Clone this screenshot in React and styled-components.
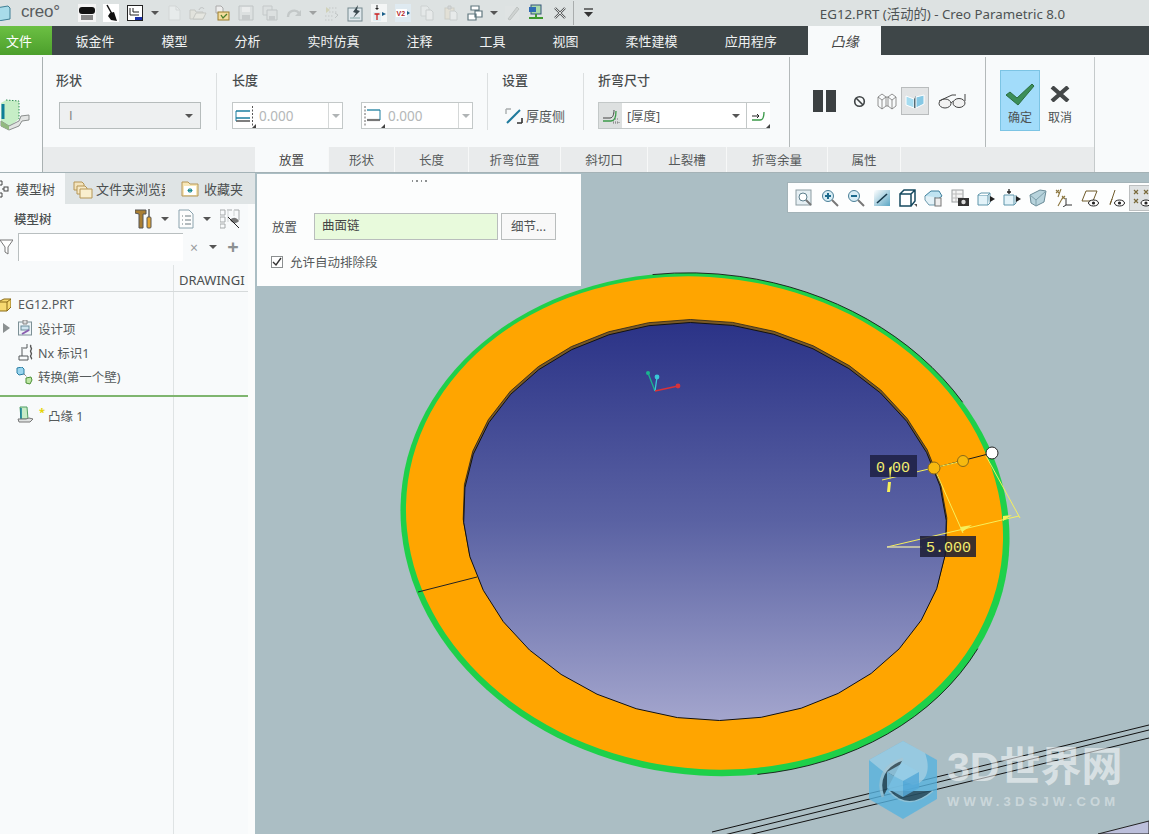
import React from 'react';
import styled, { createGlobalStyle } from 'styled-components';

const CJK = `"Noto Sans", "Noto Sans CJK SC", sans-serif`;

const Global = createGlobalStyle`
  html, body { margin: 0; padding: 0; background: #abbec4; }
  * { box-sizing: border-box; }
  body { font-family: ${CJK}; font-size: 13px; color: #4a4f50; }
`;

const Page = styled.div`width:1149px;height:834px;overflow:hidden;display:flex;flex-direction:column;`;

/* ---------- title bar ---------- */
const TitleBar = styled.div`height:26px;background:#dde2e2;display:flex;align-items:center;flex:none;`;
const Logo = styled.div`width:75px;display:flex;align-items:center;gap:10px;flex:none;color:#585c5e;`;
const LogoText = styled.span`font-family:"Liberation Sans",sans-serif;font-size:17px;letter-spacing:-.2px;position:relative;top:-1px;`;
const Slot = styled.div`width:${p => p.$w || 24}px;height:20px;display:flex;align-items:center;justify-content:center;flex:none;opacity:${p => p.$faded ? .45 : 1};`;
const TitleDivider = styled.div`width:1px;height:24px;background:#a9adad;margin:0 5px 0 1px;flex:none;`;
const TitleText = styled.div`margin-left:auto;padding-right:84px;font-size:13.3px;color:#4d5253;white-space:nowrap;`;

/* ---------- menu ---------- */
const MenuBar = styled.div`height:29px;background:#3e4648;display:flex;flex:none;align-items:stretch;`;
const FileTab = styled.div`width:52px;background:linear-gradient(#6cc043,#4c9f2c);color:#fff;display:flex;align-items:center;padding-left:6px;font-size:13px;`;
const MenuItem = styled.div`padding:0 23.5px;color:#f0f2f2;display:flex;align-items:center;font-size:13px;white-space:nowrap;`;
const ContextTab = styled.div`width:73px;margin-left:8px;background:#f8fafb;color:#444;display:flex;align-items:center;justify-content:center;font-style:italic;font-size:14px;`;

/* ---------- ribbon ---------- */
const Ribbon = styled.div`height:118px;background:#f8fafb;display:flex;flex:none;border-bottom:1px solid #a4b2b6;`;
const RibbonIconCol = styled.div`width:43px;border-right:1px solid #a9b0b1;margin-top:2px;display:flex;align-items:flex-start;padding-top:42px;`;
const RibbonMain = styled.div`width:1052px;border-right:1px solid #c5cacb;margin-top:2px;display:flex;flex-direction:column;`;
const GroupRow = styled.div`height:90px;display:flex;`;
const Group = styled.div`width:${p => p.$w}px;padding:15px 0 0 ${p => p.$pad}px;flex:none;`;
const GroupLabel = styled.div`height:16px;line-height:16px;font-size:13px;color:#484c4d;font-weight:500;`;
const Controls = styled.div`display:flex;align-items:center;margin-top:14px;height:27px;`;
const Divider = styled.div`width:1px;margin:16px 0 17px;background:#dcdfe0;flex:none;`;
const HardDivider = styled.div`width:1px;background:#b4b9ba;flex:none;`;
const ShapeSelect = styled.div`width:142px;height:27px;margin-left:3px;background:#eef0f1;border:1px solid #b6bcbc;display:flex;align-items:center;justify-content:space-between;padding:0 7px 0 9px;color:#888;font-family:"Liberation Sans",sans-serif;`;
const Caret = styled.span`width:0;height:0;border-left:4px solid transparent;border-right:4px solid transparent;border-top:4px solid ${p => p.$c || '#555'};flex:none;display:block;`;
const LengthField = styled.div`width:${p => p.$w}px;height:27px;margin-right:${p => p.$mr || 0}px;background:#fff;border:1px solid #c3c8c8;display:flex;align-items:center;flex:none;`;
const FieldIcon = styled.div`width:23px;height:25px;flex:none;display:flex;align-items:center;justify-content:center;position:relative;background:${p => p.$bg || 'transparent'};`;
const FieldValue = styled.div`flex:1;padding-left:3px;color:#b4b7b8;font-size:13.5px;`;
const Spin = styled.div`width:14px;height:25px;border-left:1px solid #d5d8d8;display:flex;align-items:center;justify-content:center;flex:none;`;
const Corner = styled.span`position:absolute;right:0;bottom:0;width:0;height:0;border-left:4px solid transparent;border-bottom:4px solid #444;`;
const ThicknessButton = styled.div`display:flex;align-items:center;gap:3px;margin-left:3px;font-size:13px;color:#55595a;`;
const BendField = styled.div`width:172px;height:27px;background:#fff;border:1px solid #c3c8c8;border-right:none;display:flex;align-items:center;font-size:12.5px;color:#555;`;
const BendText = styled.div`flex:1;padding-left:5px;`;
const BendButton = styled.div`width:24px;height:25px;border-left:1px solid #c3c8c8;margin-left:6px;display:flex;align-items:center;justify-content:center;position:relative;flex:none;`;
const ViewGroup = styled.div`width:195px;display:flex;align-items:center;padding:0 0 2px 23px;flex:none;`;
const NoSlot = styled.div`width:18px;margin:0 7px 0 11px;display:flex;justify-content:center;flex:none;`;
const ViewBtn = styled.div`width:${p => p.$w}px;height:28px;display:flex;align-items:center;justify-content:center;margin-right:${p => p.$mr || 0}px;flex:none;background:${p => p.$on ? '#e2e4e5' : 'transparent'};border:${p => p.$on ? '1px solid #b9bcbd' : 'none'};`;
const PauseBar = styled.span`width:10px;height:22px;background:#3c4042;display:block;margin-right:3px;flex:none;`;
const ActionGroup = styled.div`flex:1;display:flex;padding:13px 0 0 14px;gap:0;`;
const ActionBtn = styled.div`width:40px;height:61px;background:${p => p.$on ? '#a2dcfa' : 'transparent'};border:1px solid ${p => p.$on ? '#7cc4e4' : 'transparent'};display:flex;flex-direction:column;align-items:center;font-size:12px;color:#4d5254;padding-top:9px;`;
const ActionIcon = styled.div`height:28px;display:flex;align-items:center;justify-content:center;flex:none;`;
const TabsRow = styled.div`height:25px;background:#e9ebec;display:flex;`;
const TabFiller = styled.div`width:212px;flex:none;`;
const PanelTab = styled.div`width:${p => p.$w}px;flex:none;display:flex;align-items:center;justify-content:center;font-size:12.5px;color:${p => p.$on ? '#444' : '#55595a'};background:${p => p.$on ? '#f8fafb' : 'transparent'};border-right:1px solid #f7f8f8;`;

/* ---------- body ---------- */
const Body = styled.div`flex:1;display:flex;min-height:0;`;
const Sidebar = styled.div`width:255px;flex:none;background:#f8fafb;border-right:7px solid #fbfcfc;box-shadow:1px 0 0 #9fb0b5;display:flex;flex-direction:column;position:relative;`;
const SideTabs = styled.div`height:31px;display:flex;background:#dfe4e5;width:255px;flex:none;`;
const SideTab = styled.div`width:${p => p.$w}px;flex:none;display:flex;align-items:center;gap:${p => p.$gap || 4}px;padding-left:${p => p.$pad}px;background:${p => p.$on ? '#f8fafb' : 'transparent'};font-size:13px;color:#4b4f50;overflow:hidden;white-space:nowrap;`;
const ClippedLabel = styled.span`width:69px;overflow:hidden;display:block;flex:none;`;
const ToolRow = styled.div`height:29px;display:flex;align-items:center;padding-left:14px;flex:none;`;
const ToolLabel = styled.div`width:121px;font-size:12.5px;font-weight:500;color:#4a4e4f;`;
const ToolSlot = styled.div`width:${p => p.$w}px;display:flex;justify-content:center;align-items:center;flex:none;`;
const ClearMark = styled.span`color:#9a9e9f;font-size:14px;`;
const AddMark = styled.span`color:#8c9091;font-size:20px;font-weight:700;line-height:1;`;
const FilterRow = styled.div`height:28px;display:flex;align-items:center;flex:none;`;
const FilterInput = styled.div`width:165px;height:28px;margin:0 5px;background:#fff;border-top:1px solid #b9bfc0;border-left:1px solid #b9bfc0;flex:none;`;
const TreeBody = styled.div`flex:1;background:linear-gradient(#dfe3e4,#dfe3e4) 173px 4px/1px 100% no-repeat;display:flex;flex-direction:column;`;
const ColumnHead = styled.div`height:31px;border-bottom:1px solid #d6dadb;display:flex;align-items:flex-end;padding:0 0 2px 179px;font-size:13px;color:#4b4f50;flex:none;overflow:hidden;white-space:nowrap;`;
const TreeRow = styled.div`height:24px;display:flex;align-items:center;padding-left:${p => p.$pad}px;gap:${p => p.$gap || 6}px;font-size:12.5px;color:#555a5b;flex:none;`;
const TreeFirst = styled(TreeRow)`padding-top:1px;`;
const GreenRule = styled.div`height:2px;background:#7fb56f;margin:7px 0 6px;flex:none;`;
const TreeArrow = styled.span`width:0;height:0;border-top:5px solid transparent;border-bottom:5px solid transparent;border-left:7px solid #8b9091;display:block;margin-left:-15px;margin-right:2px;`;
const NewMark = styled.span`color:#e5d400;font-size:11px;font-weight:700;position:relative;top:-4px;margin:0 -3px 0 0;`;

/* ---------- canvas ---------- */
const Canvas = styled.div`flex:1;position:relative;background:#abbec4;overflow:hidden;`;
const Scene = styled.svg`width:100%;height:100%;display:block;`;
const DimText = styled.text`font-family:"Liberation Mono",monospace;font-size:15px;fill:#f2ee6e;`;
const Placement = styled.div`position:absolute;left:2px;top:1px;width:324px;height:112px;background:#fcfdfd;display:flex;flex-direction:column;padding:0 14px;`;
const Grip = styled.div`height:14px;margin:4px 0 21px;display:flex;justify-content:center;gap:3px;padding-top:2px;& > span{width:1.5px;height:1.5px;background:#8d9091;display:block;}`;
const PlaceRow = styled.div`display:flex;align-items:center;height:27px;font-size:12.5px;color:#505455;`;
const PlaceLabel = styled.div`width:42px;margin-left:1px;flex:none;`;
const PlaceInput = styled.div`width:184px;height:27px;background:#e8fadc;border:1px solid #b9bdbd;padding-left:7px;line-height:24px;color:#444;flex:none;`;
const DetailBtn = styled.div`width:55px;height:27px;margin-left:3px;background:#f8f8f8;border:1px solid #b9bdbd;text-align:center;line-height:25px;color:#505455;flex:none;`;
const CheckRow = styled.div`display:flex;align-items:center;margin-top:12px;gap:7px;font-size:12.5px;color:#555a5b;`;
const CheckBox = styled.div`width:12px;height:12px;border:1px solid #8b8f90;background:#fff;display:flex;align-items:center;justify-content:center;flex:none;`;
const ViewBar = styled.div`position:absolute;left:532px;top:9px;width:370px;height:31px;background:#fdfefe;border:1px solid #a3b3b8;display:flex;align-items:center;padding-left:3px;`;
const ViewTool = styled.div`width:26px;height:26px;flex:none;display:flex;align-items:center;justify-content:center;background:${p => p.$on ? '#dfe2e3' : 'transparent'};border:${p => p.$on ? '1px solid #bcbfc0' : 'none'};`;
const Watermark = styled.div`position:absolute;left:612px;top:566px;display:flex;align-items:flex-start;gap:8px;pointer-events:none;`;
const WmCol = styled.div`display:flex;flex-direction:column;margin-top:7px;`;
const WmTitle = styled.div`font-family:"Liberation Sans","Noto Sans CJK SC",sans-serif;font-weight:700;font-size:41px;line-height:42px;color:rgba(255,255,255,.55);white-space:nowrap;`;
const WmUrl = styled.div`font-family:"Liberation Sans",sans-serif;font-weight:700;font-size:13px;letter-spacing:4.2px;color:rgba(255,255,255,.4);margin-top:6px;white-space:nowrap;`;

/* ---------- geometry helpers for the part drawing ---------- */
function facets(cx, cy, a, b, deg, n) {
  const r = deg * Math.PI / 180;
  const pts = [];
  for (let i = 0; i < n; i++) {
    const t = (i / n) * Math.PI * 2;
    const x = a * Math.cos(t), y = b * Math.sin(t);
    pts.push(`${(cx + x * Math.cos(r) - y * Math.sin(r)).toFixed(1)},${(cy + x * Math.sin(r) + y * Math.cos(r)).toFixed(1)}`);
  }
  return pts.join(' ');
}

/* ---------- small drawings ---------- */
const S = ({ w = 16, h = 16, vb, children }) => <svg width={w} height={h} viewBox={vb || `0 0 ${w} ${h}`} fill="none">{children}</svg>;

const CreoCube = () => <S w={11} h={16}><path d="M-4 3 L8 1 L10 3 V14 L-2 16Z" fill="#a8dcea" stroke="#3f7f95" /></S>;
const QPrinter = () => <S w={18} h={18}><rect width="18" height="18" fill="#f4f4f4"/><rect x="1" y="3" width="16" height="7" rx="3" fill="#111"/><path d="M3 11h12v5H3z" fill="#fff"/><path d="M4 11v5M6 11v5M8 11v5M10 11v5M12 11v5M14 11v5" stroke="#111"/></S>;
const QBrush = () => <S w={16} h={18}><rect width="16" height="18" fill="#fff"/><path d="M4 1l5 9" stroke="#111" strokeWidth="1.5"/><path d="M7 9l4-1 3 9-6-1-3-4z" fill="#111"/></S>;
const QPlan = () => <S><rect x=".5" y=".5" width="15" height="15" fill="#fff" stroke="#222"/><path d="M3 3v7h9" stroke="#222"/><path d="M6 3v4h6" stroke="#222"/><rect x="8" y="12" width="7" height="3" fill="#1a2fa8"/></S>;
const QDoc = () => <S w={13} h={16}><path d="M1 1h7l4 4v10H1z" fill="#f4f6f6" stroke="#c7cbcb"/><path d="M8 1v4h4" stroke="#c7cbcb"/></S>;
const QFolder = () => <S w={18} h={16}><path d="M1 5h5l1 2h7v7H1z" fill="#e6e2d5" stroke="#a9a9a0"/><path d="M4 14l3-6h10l-3 6z" fill="#f0ecdf" stroke="#a9a9a0"/><path d="M10 5c1-3 4-3 5-1" stroke="#999"/></S>;
const QFolderCheck = () => <S><path d="M2 1h5l2 2v5H2z" fill="#eee" stroke="#aaa"/><rect x="4" y="7" width="11" height="8" fill="#f3dc9c" stroke="#9a7d2d"/><path d="M7 10l2 3 4-4" stroke="#4b7d2b" strokeWidth="1.3"/></S>;
const QSave = () => <S><path d="M1 1h14v14H1z" fill="#dcdfdf" stroke="#9da2a3"/><rect x="4" y="2" width="8" height="5" fill="#fafafa"/><rect x="4" y="10" width="8" height="5" fill="#adb1b2"/></S>;
const QSaveAs = () => <S><path d="M1 1h9v9H1z" fill="#dcdfdf" stroke="#a8acad"/><path d="M5 5h10v10H5z" fill="#dcdfdf" stroke="#9da2a3"/><rect x="7" y="11" width="6" height="4" fill="#adb1b2"/></S>;
const QRedo = () => <S><path d="M2 12c0-7 8-8 11-4" stroke="#a4a9aa" strokeWidth="2.4"/><path d="M15 5v6h-6z" fill="#a4a9aa"/></S>;
const QRegen = () => <S><path d="M6 3h9M6 7h9M2 11h9M2 15h9" stroke="#b9bdbe" strokeDasharray="1.5 1.5" strokeWidth="1.5"/><path d="M3 2l4 3-4 3z" fill="#c4c089"/><path d="M12 8l3 2-3 3" stroke="#9ea2a3"/></S>;
const QBolt = () => <S w={17} h={17}><rect x="1" y="3" width="14" height="13" fill="#dfe8ec" stroke="#77898f"/><path d="M11 0L6 7l3 1-3 5 7-7-3-1z" fill="#3b4a50"/><path d="M3 13h10" stroke="#8aa"/></S>;
const QT = () => <S w={16} h={18}><rect width="16" height="18" fill="#f4f6f6"/><path d="M6 1v4" stroke="#222"/><path d="M4 4h4l-2 2z" fill="#222"/><rect x="2" y="8" width="8" height="9" fill="#e2eff3"/><path d="M3.5 10h5M6 10v6" stroke="#c22" strokeWidth="1.3"/><path d="M15 10l-4 -2v4z" fill="#1b5f8a"/></S>;
const QV2 = () => <S w={16} h={18}><rect width="16" height="18" fill="#dfeaf1"/><rect x="1" y="5" width="11" height="8" fill="#fff"/><text x="1.5" y="12" fontSize="7" fontWeight="700" fontFamily="Liberation Sans" fill="#b3262c">V2</text><path d="M15 9l-3-2v4z" fill="#1b5f8a"/></S>;
const QCopy = () => <S><path d="M2 1h6l2 2v8H2z" fill="#eef0f0" stroke="#bdc1c1"/><path d="M7 5h5l2 2v8H7z" fill="#f4f5f5" stroke="#b3b7b7"/></S>;
const QPaste = () => <S><rect x="2" y="3" width="9" height="11" fill="#eadfc9" stroke="#bcb6a6"/><path d="M5 1h3v3H5z" fill="#ccc" stroke="#aaa"/><path d="M7 6h5l2 2v7H7z" fill="#f4f5f5" stroke="#b3b7b7"/></S>;
const QWindows = () => <S><path d="M4 1h8v4H4zM8 6h7v6H8zM1 9h8v6H1z" fill="#fff" stroke="#60777f" strokeWidth="1.2"/></S>;
const QPen = () => <S w={16} h={18}><path d="M1 2h10l4 3v12H1z" fill="#e4e8e8" opacity=".7"/><path d="M4 15L13 3l2 2-9 11z" fill="#bfc3c0" stroke="#9a9e9b"/></S>;
const QNet = () => <S w={16} h={18}><rect x="3" y="1" width="10" height="9" fill="#a9d9a9" stroke="#35547a"/><rect x="1" y="3" width="7" height="5" fill="#2f6bb4"/><path d="M8 10v3M1 14h14" stroke="#3e9a2e" strokeWidth="2"/></S>;
const QClose = () => <S w={12} h={12}><path d="M1 1l10 10M11 1L1 11" stroke="#55595a" strokeWidth="2.4"/><path d="M1 1l10 10M11 1L1 11" stroke="#fff" strokeWidth=".8"/></S>;
const QMore = () => <S w={9} h={10}><path d="M0 1h9" stroke="#333" strokeWidth="1.3"/><path d="M0 4h9L4.5 9z" fill="#333"/></S>;

const FlangeBig = () => (
  <S w={30} h={32}>
    <path d="M1 4L6 1 19 2V20L9 28 1 24Z" fill="#c6eec6" />
    <path d="M6 1L19 2V20" stroke="#2f8f55" strokeDasharray="1.5 1.5" />
    <path d="M3 5V20" stroke="#0f7e99" strokeWidth="3" />
    <path d="M1 22L9 27 19 22 21 17 29 16V21L22 22 19 27 9 31 1 27Z" fill="#e3e5e4" stroke="#8a8e8d" />
    <path d="M1 22L9 27V31L1 27Z" fill="#92b97f" />
  </S>
);
const DimLeft = ({ flip }) => <S w={21} h={20}><path d={flip ? 'M1 12h16M1 5h16' : 'M2 5h14M2 12h14'} stroke={flip ? '#8a8e8e' : '#1d7fa0'} strokeWidth="1.4" /><path d="M2 15h14" stroke="#7f7f7f" strokeWidth="2"/><path d="M2 5v10" stroke="#1d7fa0"/><path d="M18.5 0v20" stroke="#555" strokeDasharray="2 1.5"/></S>;
const DimRight = () => <S w={21} h={20}><path d="M2 0v20" stroke="#666" strokeDasharray="2 1.5"/><path d="M4 4h13" stroke="#1d7fa0" strokeWidth="1.3"/><path d="M4 14h13" stroke="#777" strokeWidth="2.2"/><path d="M17 4v10" stroke="#1d7fa0"/></S>;
const Thick = () => <S w={18} h={18}><path d="M2 16L15 3" stroke="#1f7a9c" strokeWidth="2"/><path d="M1 2h5M1 2v5" stroke="#a9adae" strokeWidth="1.4"/><path d="M17 16h-5M17 16v-5" stroke="#333" strokeWidth="1.6"/></S>;
const BendA = () => <S w={18} h={18}><path d="M1 14h8c3 0 5-4 5-10" stroke="#3c9a4a" strokeWidth="1.3"/><path d="M1 11h7c3 0 4-4 4-8" stroke="#444"/><path d="M11 15h6v1h-6zM13 12h4" stroke="#777" strokeDasharray="1 1"/></S>;
const BendB = () => <S w={18} h={18}><path d="M2 13h8c3 0 4-4 4-8" stroke="#3c9a4a" strokeWidth="1.3"/><path d="M2 9h7l-2-2M9 9l-2 2" stroke="#222"/></S>;
const NoSign = () => <S w={13} h={13}><circle cx="6.5" cy="6.5" r="4.8" stroke="#3f4345" strokeWidth="1.6"/><path d="M3 3l7 7" stroke="#3f4345" strokeWidth="1.6"/></S>;
const WireBox = () => <S w={20} h={18}><path d="M1 5l4-3 4 3-4 3zM11 5l4-3 4 3-4 3z" stroke="#777" strokeWidth=".8"/><path d="M1 5v9l4 3V8M9 5v9l-4 3M11 5v9l4 3V8M19 5v9l-4 3M9 5l2 0M9 14l2 0" stroke="#777" strokeWidth=".8"/></S>;
const SolidBox = () => <S w={20} h={16}><path d="M1 3l8 3v9l-8-3z" fill="#a6dcf0" stroke="#fff"/><path d="M9 6l2-3v12l-2 0z" fill="#536a73"/><path d="M11 4l8-2v9l-8 4z" fill="#86c8e4" stroke="#fff"/></S>;
const Glasses = () => <S w={28} h={16}><ellipse cx="7" cy="10.5" rx="6" ry="4.5" stroke="#444" fill="#f2f2f2"/><ellipse cx="21" cy="10" rx="6" ry="4.5" stroke="#444" fill="#f2f2f2"/><path d="M13 10c2-2 2-2 2-1M1 8L14 2l4 0M27 8V1" stroke="#444"/></S>;
const Check = () => <S w={30} h={24}><path d="M1 13l4-3 7 6L27 2l2 2-16 19z" fill="#3b8e58" stroke="#2b6d40"/></S>;
const Cross = () => <S w={20} h={16}><path d="M2 1l16 14M18 1L2 15" stroke="#444748" strokeWidth="4.2"/></S>;

const TreeIconSmall = () => <S w={10} h={20}><path d="M-3 2h5v4h-5zM-3 14h5v4h-5z" stroke="#444"/><rect x="4" y="8" width="4" height="4" stroke="#444"/><path d="M2 10h2" stroke="#444"/></S>;
const Folders = () => <S w={20} h={20}><path d="M1 3h8l2 2v6H1z" fill="#f3e3bc" stroke="#b59656"/><path d="M4 7h8l2 2v6H4z" fill="#f7e9c5" stroke="#b59656"/><path d="M7 10h12v9H7z" fill="#f9efce" stroke="#b59656"/></S>;
const StarFolder = () => <S w={18} h={18}><path d="M1 2h6l2 2h8v12H1z" fill="#f8e7b7" stroke="#b59656"/><rect x="3" y="6" width="12" height="9" fill="#fff"/><path d="M9 8v5M6.5 10.5h5M7 9l4 3M11 9l-4 3" stroke="#1a8a90" /></S>;
const Hammer = () => <S w={18} h={21}><path d="M0 2h11v4H8v14H4V6L0 5z" fill="#a97e33" stroke="#555"/><rect x="13" y="1" width="2" height="9" fill="#888"/><rect x="12" y="9" width="4" height="11" rx="1" fill="#e3a634" stroke="#555"/></S>;
const ListDoc = () => <S w={16} h={20}><path d="M1 1h10l4 4v14H1z" fill="#fdfdfd" stroke="#8aa2ad"/><path d="M4 7h1M7 7h6M4 11h1M7 11h6M4 15h1M7 15h6" stroke="#6c7a80"/></S>;
const ColEye = () => <S w={20} h={20}><path d="M0 1h5v5H0zM0 8h5v5H0zM0 15h5v4H0zM7 1h5M14 1h5M19 1v10" stroke="#a5a9aa"/><path d="M8 1v12M14 1v6" stroke="#cfd3d3"/><path d="M10 11c3-3 6-3 9 1-3 3-6 3-9-1z" fill="#777"/><path d="M8 8l11 11" stroke="#222"/></S>;
const Funnel = () => <S w={13} h={16}><path d="M0 1h13L8 8v7L5 13V8z" fill="#fff" stroke="#777"/></S>;
const PartCube = () => <S w={11} h={14}><path d="M-2 4L4 1h7v8l-4 4H-2z" fill="#f6d970" stroke="#8a6a17"/><path d="M-2 4h9l4-3M7 4v9" stroke="#8a6a17"/></S>;
const DesignIcon = () => <S w={14} h={16}><rect x=".5" y="2" width="13" height="13" fill="#eef4f7" stroke="#7d9096"/><path d="M5 0h4v4H5z" fill="#ddd" stroke="#888"/><rect x="3" y="6" width="8" height="4" fill="#cfe5ef" stroke="#6a8c99"/><path d="M4 14l7-4" stroke="#8a5db0" strokeWidth="2"/></S>;
const NxIcon = () => <S w={15} h={18}><path d="M3 5h6V1M1 13h9v4H1zM4 6v7" stroke="#55595a"/><path d="M13 2c-2 2 2 3 0 5s2 3 0 5 2 3 0 4" stroke="#555" strokeWidth="1.4"/></S>;
const ConvertIcon = () => <S w={17} h={18}><path d="M1 1l5-1 2 2v5l-5 1-2-2z" fill="#9ad5ee" stroke="#2a7ea4"/><path d="M10 11l5-1 1 3-2 4-4-1z" fill="#bfe6a5" stroke="#4a8f35"/><path d="M8 7l3 3" stroke="#555" strokeDasharray="1 1"/></S>;
const FlangeSmall = () => <S w={16} h={18}><path d="M3 1h7l1 12H4z" fill="#c7ecc6" stroke="#4f9d62"/><path d="M4 2v11" stroke="#0f7e99" strokeWidth="1.5"/><path d="M1 13h8l3-1 4 1-3 3H2z" fill="#dfe2e1" stroke="#777"/></S>;

const VT = {
  zoomWin: <S w={18} h={18}><rect x="1" y="1" width="15" height="15" fill="#e5eff3" stroke="#8b9ba1"/><circle cx="8" cy="8" r="4" fill="#fff" stroke="#5d7f8d"/><path d="M11 11l5 5" stroke="#777" strokeWidth="2"/></S>,
  zoomIn: <S w={18} h={18}><circle cx="7" cy="7" r="5.5" fill="#d8edf5" stroke="#4a7f97"/><path d="M4 7h6M7 4v6" stroke="#1b6a8d" strokeWidth="2"/><path d="M11 11l6 6" stroke="#777" strokeWidth="2"/></S>,
  zoomOut: <S w={18} h={18}><circle cx="7" cy="7" r="5.5" fill="#d8edf5" stroke="#4a7f97"/><path d="M4 7h6" stroke="#1b6a8d" strokeWidth="2"/><path d="M11 11l6 6" stroke="#777" strokeWidth="2"/></S>,
  refit: <S w={16} h={16}><defs><linearGradient id="rg" x1="0" y1="0" x2="1" y2="1"><stop offset="0" stopColor="#fff"/><stop offset="1" stopColor="#5aa6c4"/></linearGradient></defs><rect width="16" height="16" fill="url(#rg)"/><path d="M3 13L13 4" stroke="#16384a" strokeWidth="1.6"/></S>,
  cube: <S w={18} h={18}><path d="M1 5h11v12H1zM1 5l4-4h11v11l-4 5M12 5l4-4" stroke="#16495f" strokeWidth="1.5" fill="#fff"/><path d="M15 15h3v3z" fill="#555"/></S>,
  cubeDoc: <S w={20} h={18}><path d="M1 7l6-5h8l3 5-5 4H4z" fill="#bfe3f1" stroke="#3d7f9b"/><path d="M1 7v4l4 5h6V8" stroke="#6c9aae" fill="#e2f1f7"/><rect x="11" y="9" width="6" height="8" fill="#eee" stroke="#777"/></S>,
  camera: <S w={18} h={18}><rect x="1" y="1" width="11" height="12" fill="#f4f4f4" stroke="#9a9e9f"/><path d="M1 5h11M1 9h11M5 1v12" stroke="#bbb"/><rect x="7" y="9" width="11" height="8" fill="#333"/><circle cx="12.5" cy="13" r="2.2" fill="#ddd"/></S>,
  boxIn: <S w={18} h={18}><path d="M1 6h10v10H1z" fill="#e3f3f9" stroke="#5f96ab"/><path d="M1 6l3-2h9l-2 2M11 16l2-2V4" stroke="#5f96ab" fill="#fff"/><path d="M18 10l-5-3v6z" fill="#222"/></S>,
  boxOut: <S w={18} h={18}><path d="M1 6h10v10H1z" fill="#e3f3f9" stroke="#5f96ab"/><path d="M11 16l2-2V6" stroke="#5f96ab"/><path d="M6 0v5M4 3h4" stroke="#222" strokeWidth="1.3"/><path d="M18 10l-5-3v6z" fill="#222"/></S>,
  glass: <S w={18} h={18}><path d="M1 6l10-5 6 1-2 11-8 4-5-3z" fill="#b7d3dc" stroke="#6a8b97"/><path d="M1 6l6 5 10-9M7 11v6" stroke="#7ea0ab"/></S>,
  axes: <S w={18} h={18}><path d="M1 1l3 3M4 1L1 4M7 7l3 3M10 7l-3 3M6 0l-3 8M3 17l5-9" stroke="#8d7841" strokeWidth="1.1"/><path d="M11 9v7h6M11 16l-3 2" stroke="#333"/></S>,
  plane: <S w={18} h={18}><path d="M1 12L5 2h11l-4 10z" stroke="#6f5a2a" fill="#fff"/><ellipse cx="12.5" cy="14" rx="5" ry="3" fill="#fff" stroke="#222"/><circle cx="12.5" cy="14" r="1.6" fill="#222"/></S>,
  line: <S w={18} h={18}><path d="M8 1L3 16M3 15l2-5" stroke="#6f5a2a"/><ellipse cx="12.5" cy="14" rx="5" ry="3" fill="#fff" stroke="#222"/><circle cx="12.5" cy="14" r="1.6" fill="#222"/></S>,
  pts: <S w={20} h={20}><path d="M2 2l4 4M6 2L2 6M12 2l4 4M16 2l-4 4M2 11l4 4M6 11l-4 4" stroke="#7a6a3a" strokeWidth="1.2"/><ellipse cx="14" cy="15" rx="5" ry="3" fill="#fff" stroke="#222"/><circle cx="14" cy="15" r="1.6" fill="#222"/></S>,
};

const HexLogo = () => (
  <svg width="72" height="82" viewBox="0 0 72 82">
    <path d="M36 2L70 21V60L36 80 2 60V21Z" fill="#58b3de" opacity=".8"/>
    <path d="M36 2L58 14C64 30 60 44 46 46L18 34 2 21Z" fill="#abd2e3" opacity=".7"/>
    <path d="M16 58C10 42 16 26 36 20" stroke="#aec6ce" strokeWidth="3" opacity=".55"/>
    <path d="M22 52C36 68 52 64 66 52" stroke="#b7cfd6" strokeWidth="1.5" opacity=".5"/>
    <path d="M36 24L52 33 36 42 20 33Z" fill="#94cce6" opacity=".85"/>
    <path d="M20 33L36 42V58L20 49Z" fill="#78bee0" opacity=".85"/>
    <path d="M52 33L36 42V58L52 49Z" fill="#55a9d8" opacity=".85"/>
  </svg>
);

/* ---------- data ---------- */
const menus = ['钣金件', '模型', '分析', '实时仿真', '注释', '工具', '视图', '柔性建模', '应用程序'];
const tabs = [['放置', 74, true], ['形状', 66], ['长度', 74], ['折弯位置', 92], ['斜切口', 87], ['止裂槽', 79], ['折弯余量', 101], ['属性', 73]];
const viewTools = ['zoomWin', 'zoomIn', 'zoomOut', 'refit', 'cube', 'cubeDoc', 'camera', 'boxIn', 'boxOut', 'glass', 'axes', 'plane', 'line', 'pts'];

export default function App() {
  return (
    <Page>
      <Global />
      <TitleBar>
        <Logo><CreoCube /><LogoText>creo°</LogoText></Logo>
        <Slot><QPrinter /></Slot>
        <Slot><QBrush /></Slot>
        <Slot><QPlan /></Slot>
        <Slot $w={15}><Caret /></Slot>
        <Slot $faded><QDoc /></Slot>
        <Slot $faded><QFolder /></Slot>
        <Slot><QFolderCheck /></Slot>
        <Slot $faded><QSave /></Slot>
        <Slot $faded><QSaveAs /></Slot>
        <Slot $faded><QRedo /></Slot>
        <Slot $w={13} $faded><Caret /></Slot>
        <Slot $faded><QRegen /></Slot>
        <Slot><QBolt /></Slot>
        <Slot><QT /></Slot>
        <Slot><QV2 /></Slot>
        <Slot $faded><QCopy /></Slot>
        <Slot $faded><QPaste /></Slot>
        <Slot><QWindows /></Slot>
        <Slot $w={13}><Caret /></Slot>
        <Slot $faded><QPen /></Slot>
        <Slot><QNet /></Slot>
        <Slot><QClose /></Slot>
        <TitleDivider />
        <Slot $w={18}><QMore /></Slot>
        <TitleText>EG12.PRT (活动的) - Creo Parametric 8.0</TitleText>
      </TitleBar>

      <MenuBar>
        <FileTab>文件</FileTab>
        {menus.map(m => <MenuItem key={m}>{m}</MenuItem>)}
        <ContextTab>凸缘</ContextTab>
      </MenuBar>

      <Ribbon>
        <RibbonIconCol><FlangeBig /></RibbonIconCol>
        <RibbonMain>
          <GroupRow>
            <Group $w={173} $pad={13}>
              <GroupLabel>形状</GroupLabel>
              <Controls><ShapeSelect>I<Caret /></ShapeSelect></Controls>
            </Group>
            <Divider />
            <Group $w={270} $pad={15}>
              <GroupLabel>长度</GroupLabel>
              <Controls>
                <LengthField $w={111} $mr={18}>
                  <FieldIcon><DimLeft /><Corner /></FieldIcon>
                  <FieldValue>0.000</FieldValue>
                  <Spin><Caret $c="#b0b4b5" /></Spin>
                </LengthField>
                <LengthField $w={112}>
                  <FieldIcon><DimRight /><Corner /></FieldIcon>
                  <FieldValue>0.000</FieldValue>
                  <Spin><Caret $c="#b0b4b5" /></Spin>
                </LengthField>
              </Controls>
            </Group>
            <Divider />
            <Group $w={95} $pad={14}>
              <GroupLabel>设置</GroupLabel>
              <Controls><ThicknessButton><Thick />厚度侧</ThicknessButton></Controls>
            </Group>
            <Divider />
            <Group $w={205} $pad={14}>
              <GroupLabel>折弯尺寸</GroupLabel>
              <Controls>
                <BendField>
                  <FieldIcon $bg="#dde0e0"><BendA /></FieldIcon>
                  <BendText>[厚度]</BendText>
                  <Caret />
                  <BendButton><BendB /><Corner /></BendButton>
                </BendField>
              </Controls>
            </Group>
            <HardDivider />
            <ViewGroup>
              <PauseBar /><PauseBar />
              <NoSlot><NoSign /></NoSlot>
              <ViewBtn $w={23} $mr={3}><WireBox /></ViewBtn>
              <ViewBtn $w={28} $mr={9} $on><SolidBox /></ViewBtn>
              <ViewBtn $w={28}><Glasses /></ViewBtn>
            </ViewGroup>
            <HardDivider />
            <ActionGroup>
              <ActionBtn $on><ActionIcon><Check /></ActionIcon>确定</ActionBtn>
              <ActionBtn><ActionIcon><Cross /></ActionIcon>取消</ActionBtn>
            </ActionGroup>
          </GroupRow>
          <TabsRow>
            <TabFiller />
            {tabs.map(([t, w, on]) => <PanelTab key={t} $w={w} $on={on}>{t}</PanelTab>)}
          </TabsRow>
        </RibbonMain>
      </Ribbon>

      <Body>
        <Sidebar>
          <SideTabs>
            <SideTab $w={65} $on $pad={0} $gap={6}><TreeIconSmall />模型树</SideTab>
            <SideTab $w={110} $pad={8} $gap={3}><Folders /><ClippedLabel>文件夹浏览器</ClippedLabel></SideTab>
            <SideTab $w={80} $pad={6} $gap={5}><StarFolder />收藏夹</SideTab>
          </SideTabs>
          <ToolRow>
            <ToolLabel>模型树</ToolLabel>
            <ToolSlot $w={18}><Hammer /></ToolSlot>
            <ToolSlot $w={24}><Caret /></ToolSlot>
            <ToolSlot $w={18}><ListDoc /></ToolSlot>
            <ToolSlot $w={24}><Caret /></ToolSlot>
            <ToolSlot $w={22}><ColEye /></ToolSlot>
          </ToolRow>
          <FilterRow>
            <Funnel />
            <FilterInput />
            <ToolSlot $w={12}><ClearMark>×</ClearMark></ToolSlot>
            <ToolSlot $w={26}><Caret /></ToolSlot>
            <ToolSlot $w={14}><AddMark>+</AddMark></ToolSlot>
          </FilterRow>
          <TreeBody>
            <ColumnHead>DRAWINGI</ColumnHead>
            <TreeFirst $pad={0} $gap={7}><PartCube />EG12.PRT</TreeFirst>
            <TreeRow $pad={18}><TreeArrow /><DesignIcon />设计项</TreeRow>
            <TreeRow $pad={18} $gap={5}><NxIcon />Nx 标识1</TreeRow>
            <TreeRow $pad={16} $gap={5}><ConvertIcon />转换(第一个壁)</TreeRow>
            <GreenRule />
            <TreeRow $pad={17}><FlangeSmall /><NewMark>*</NewMark>凸缘 1</TreeRow>
          </TreeBody>
        </Sidebar>

        <Canvas>
          <Scene viewBox="255 173 894 661">
            <defs>
              <linearGradient id="hole" gradientUnits="userSpaceOnUse" x1="0" y1="323" x2="0" y2="720">
                <stop offset="0" stopColor="#2b3387" />
                <stop offset=".5" stopColor="#5a62a3" />
                <stop offset="1" stopColor="#a3a5cd" />
              </linearGradient>
            </defs>
            <path d="M712 832L1149 725M712 838L1149 730M740 837L1149 738" stroke="#111" strokeWidth="1" />
            <path d="M1098 834L1149 821V834Z" fill="#bcbfdb" stroke="#222" />
            <ellipse cx="705" cy="524.5" rx="305.5" ry="250.5" transform="rotate(8 705 524.5)" fill="#1ed04a" />
            <ellipse cx="704.5" cy="523" rx="299.5" ry="245.5" transform="rotate(8 704.5 523)" fill="#ffa500" />
            <ellipse cx="705" cy="524.5" rx="305.5" ry="250.5" transform="rotate(8 705 524.5)" fill="none" stroke="#111" strokeWidth=".8" pathLength="100" strokeDasharray="15 50 20 15" strokeDashoffset="-5" />
            <polygon points={facets(705, 518.5, 243, 198, 8, 36)} fill="#7b5a24" stroke="#222" strokeWidth=".8" />
            <polygon points={facets(705, 521.5, 242.5, 198, 8, 36)} fill="url(#hole)" stroke="#111" strokeWidth="1" />
            <path d="M418 592L477 577" stroke="#222" strokeWidth="1" />
            {/* coordinate triad */}
            <path d="M655 391L648 373" stroke="#19b58e" strokeWidth="1.3" />
            <path d="M655 391L657 377" stroke="#39c8d8" strokeWidth="1.3" />
            <path d="M655 391L678 386" stroke="#d8323a" strokeWidth="1.3" />
            <circle cx="648" cy="373" r="2" fill="#19b58e" /><circle cx="657" cy="377" r="2.4" fill="#39c8d8" /><circle cx="678" cy="386" r="2.4" fill="#d8323a" />
            {/* dimensions */}
            <path d="M934 468L992 453" stroke="#1a1a1a" strokeWidth="1" />
            <path d="M882 480L963 461" stroke="#f6ef5a" strokeWidth="1" />
            <path d="M936 472L963 533M986 456L1020 518M887 547L1019 516" stroke="#f6ef5a" strokeWidth="1" />
            <path d="M887 547L922 547" stroke="#d8d6a8" strokeWidth="1.4" />
            <path d="M960 527L972 525 962 532ZM1003 516L1012 515 1003 521Z" fill="#f6ef5a" />
            <rect x="870" y="455" width="47" height="22" fill="#24274f" />
            <DimText x="876" y="472">0</DimText>
            <DimText x="892" y="472">00</DimText>
            <path d="M889 468L892 466 890 480ZM888 482L891 482 890 492 887 492Z" fill="#f6ef5a" />
            <rect x="920" y="536" width="56" height="21" fill="#1c1c33" opacity=".85" />
            <DimText x="926" y="552">5.000</DimText>
            <circle cx="934" cy="468" r="6" fill="#f7b90f" stroke="#8a6a18" strokeWidth="1" />
            <circle cx="963" cy="461" r="5.5" fill="#f7b90f" stroke="#8a6a18" strokeWidth="1" />
            <circle cx="992" cy="453" r="6" fill="#fff" stroke="#222" strokeWidth="1" />
          </Scene>

          <Placement>
            <Grip><span /><span /><span /><span /></Grip>
            <PlaceRow>
              <PlaceLabel>放置</PlaceLabel>
              <PlaceInput>曲面链</PlaceInput>
              <DetailBtn>细节...</DetailBtn>
            </PlaceRow>
            <CheckRow>
              <CheckBox><S w={10} h={10}><path d="M1 5l3 3 5-7" stroke="#333" strokeWidth="1.4" /></S></CheckBox>
              允许自动排除段
            </CheckRow>
          </Placement>

          <ViewBar>
            {viewTools.map((k, i) => <ViewTool key={k} $on={i === viewTools.length - 1}>{VT[k]}</ViewTool>)}
          </ViewBar>

          <Watermark>
            <HexLogo />
            <WmCol>
              <WmTitle>3D世界网</WmTitle>
              <WmUrl>WWW.3DSJW.COM</WmUrl>
            </WmCol>
          </Watermark>
        </Canvas>
      </Body>
    </Page>
  );
}
